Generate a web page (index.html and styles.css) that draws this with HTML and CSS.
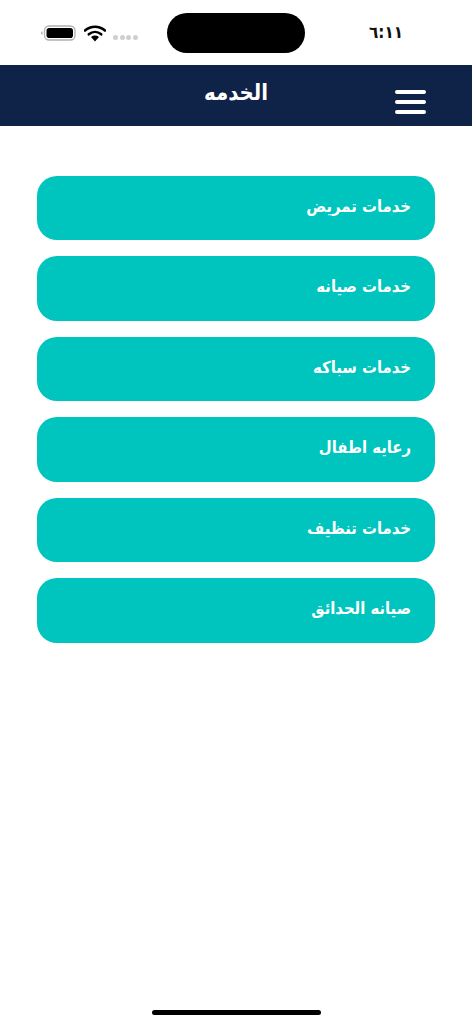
FILE: index.html
```html
<!DOCTYPE html>
<html lang="ar">
<head>
    <meta charset="UTF-8">
    <meta name="viewport" content="width=device-width, initial-scale=1.0">
    <title>الخدمه</title>
    <link rel="stylesheet" href="styles.css">
</head>
<body>
    <div class="status-bar">
        <div class="status-icons">
            <svg class="battery" width="36" height="16" viewBox="0 0 36 16">
                <path d="M1.500 6.200v3.600C.6 9.500 0 8.800 0 8s.6-1.500 1.500-1.800z" fill="#a8a8a8"/>
                <rect x="3.500" y="1" width="30.500" height="14" rx="4.500" fill="none" stroke="#b0b0b0" stroke-width="1.300"/>
                <rect x="5.500" y="3" width="26.500" height="10" rx="2.800" fill="#000"/>
            </svg>
            <svg class="wifi" width="22" height="17" viewBox="0 0 22 17">
                <path d="M1 5.500C6.800.4 15.200.4 21 5.500" fill="none" stroke="#000" stroke-width="2.600" stroke-linecap="round"/>
                <path d="M4.800 9.300c3.700-3.100 8.700-3.100 12.400 0" fill="none" stroke="#000" stroke-width="2.600" stroke-linecap="round"/>
                <path d="M7 12c2.500-1.900 5.500-1.900 8 0l-4 4.600z" fill="#000"/>
            </svg>
            <div class="signal">
                <span class="signal-dot"></span>
                <span class="signal-dot"></span>
                <span class="signal-dot"></span>
                <span class="signal-dot"></span>
            </div>
        </div>
        <div class="island"></div>
        <div class="time">٦:١١</div>
    </div>

    <header class="app-header">
        <h1 class="app-title">الخدمه</h1>
        <button type="button" class="menu-button" aria-label="menu">
            <span class="menu-line"></span>
            <span class="menu-line"></span>
            <span class="menu-line"></span>
        </button>
    </header>

    <main class="service-list">
        <a class="service-item">خدمات تمريض</a>
        <a class="service-item">خدمات صيانه</a>
        <a class="service-item">خدمات سباكه</a>
        <a class="service-item">رعايه اطفال</a>
        <a class="service-item">خدمات تنظيف</a>
        <a class="service-item">صيانه الحدائق</a>
    </main>

    <div class="home-indicator"></div>
</body>
</html>
```

FILE: styles.css
```css
html, body {
    height: 100%;
}

body {
    margin: 0;
    font-family: "DejaVu Sans Condensed", "DejaVu Sans", sans-serif;
    background-color: #fff;
    display: flex;
    flex-direction: column;
    overflow: hidden;
}

.status-bar {
    height: 65px;
    display: flex;
    flex-shrink: 0;
    padding-top: 13px;
    box-sizing: border-box;
}

.status-icons {
    width: 167px;
    height: 40px;
    display: flex;
    align-items: center;
    padding-left: 41px;
    box-sizing: border-box;
}

.wifi {
    margin-left: 7px;
}

.signal {
    display: flex;
    gap: 1.500px;
    margin-left: 7px;
    margin-top: 9px;
}

.signal-dot {
    width: 5px;
    height: 5px;
    border-radius: 50%;
    background: #cfcfcf;
}

.island {
    width: 138px;
    height: 40px;
    border-radius: 20px;
    background: #000;
}

.time {
    flex: 1;
    height: 40px;
    padding-left: 64px;
    font-size: 17px;
    font-weight: bold;
    letter-spacing: -2.500px;
    line-height: 38px;
    color: #111;
    direction: ltr;
}

.app-header {
    height: 61px;
    flex-shrink: 0;
    background: #0f2248;
    position: relative;
    display: flex;
    justify-content: center;
}

.app-title {
    margin: 8px 0 0;
    font-size: 22px;
    line-height: 40px;
    font-weight: bold;
    color: #fff;
}

.menu-button {
    position: absolute;
    top: 25px;
    right: 46px;
    width: 31px;
    padding: 0;
    border: none;
    background: none;
    display: flex;
    flex-direction: column;
    gap: 6px;
}

.menu-line {
    display: block;
    height: 4px;
    border-radius: 2px;
    background: #fff;
}

.service-list {
    flex: 1;
    display: flex;
    flex-direction: column;
    gap: 16px;
    padding: 49.700px 37px 0;
}

.service-item {
    height: 64.500px;
    border-radius: 20px;
    background: #00c4be;
    color: #fff;
    font-size: 16.500px;
    font-weight: bold;
    line-height: 61px;
    direction: rtl;
    padding: 0 24px;
}

.home-indicator {
    width: 169px;
    height: 5px;
    flex-shrink: 0;
    margin: 0 auto 9px;
    border-radius: 3px;
    background: #000;
}
```
